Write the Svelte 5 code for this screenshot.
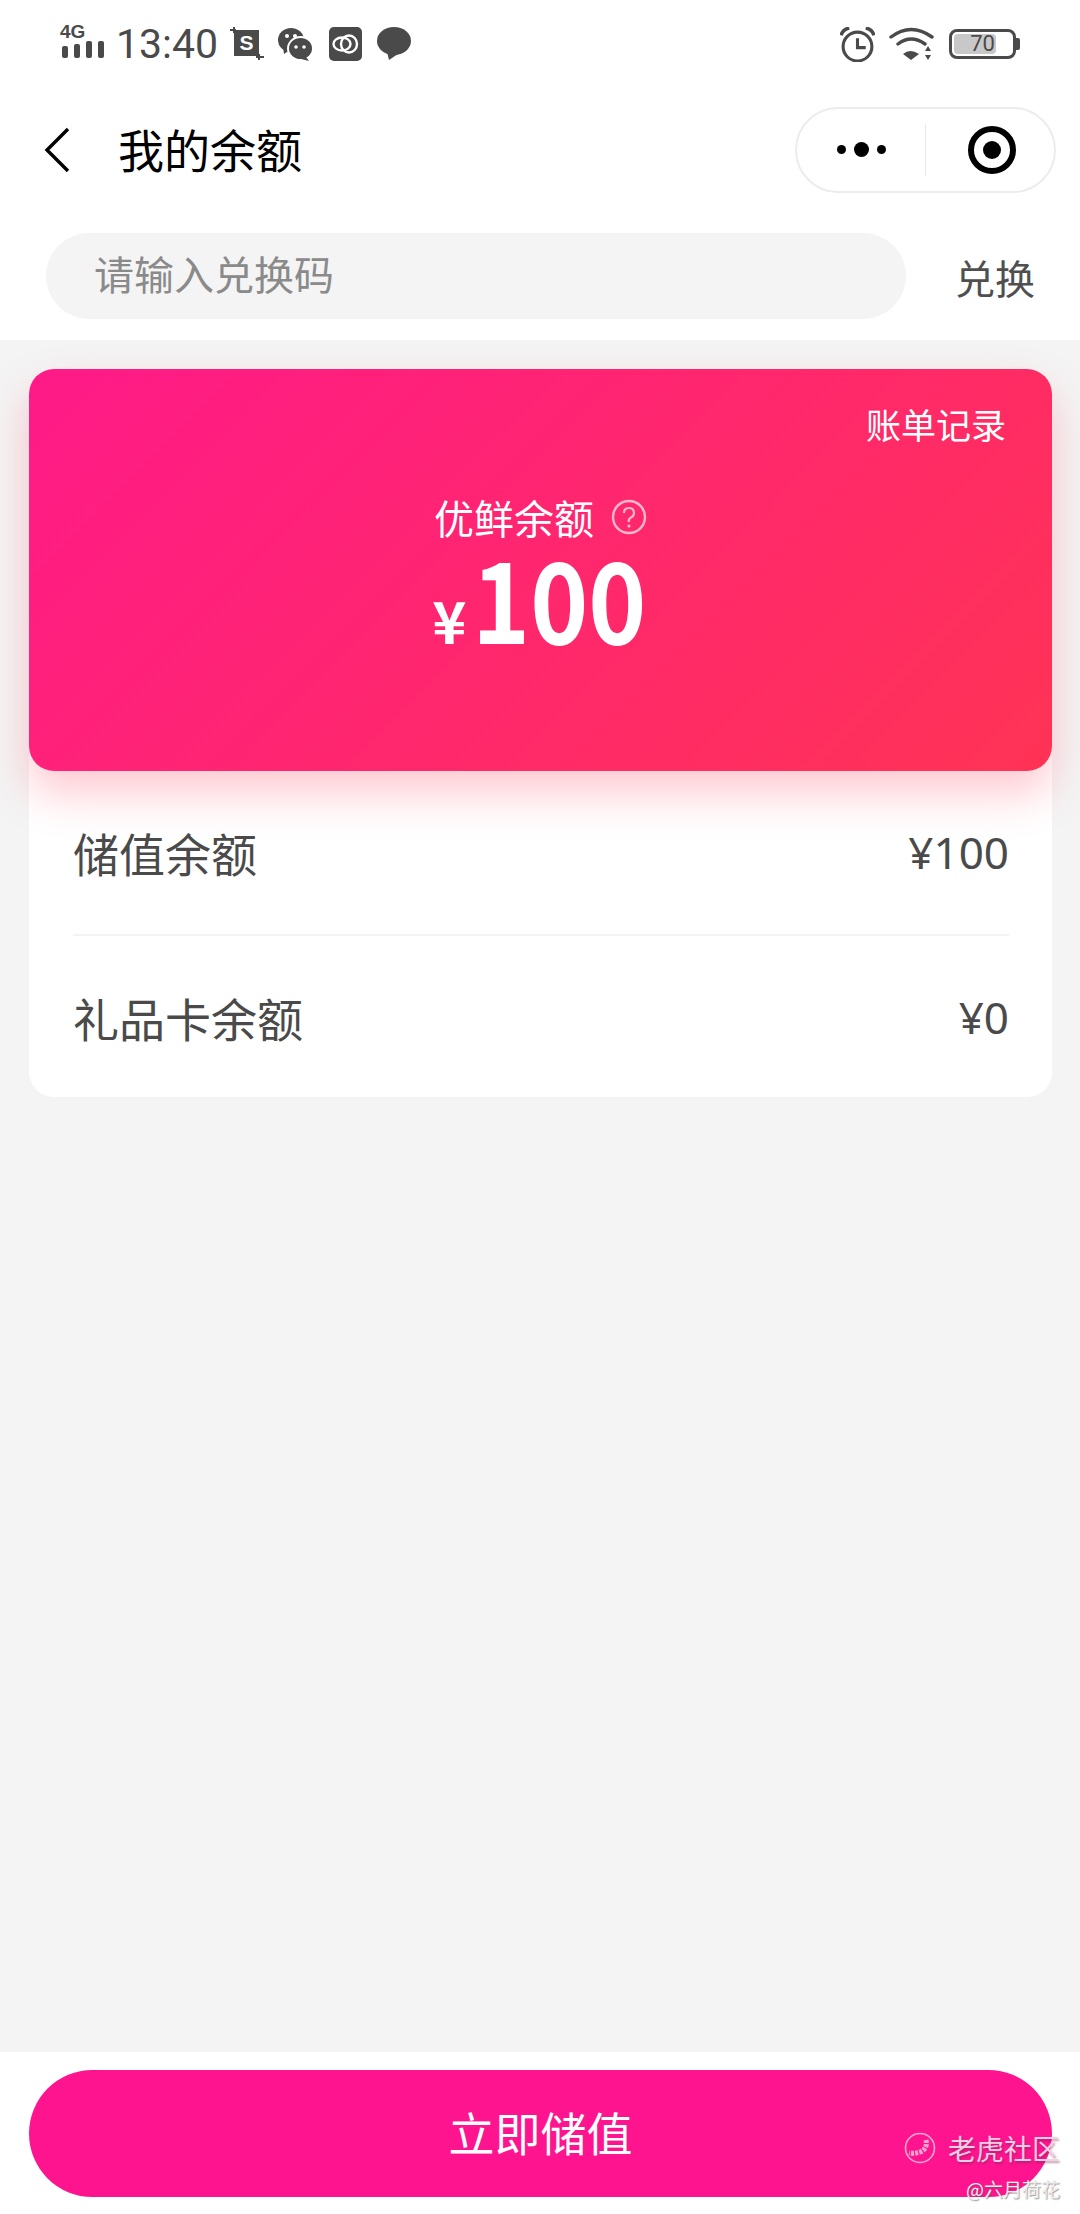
<script lang="ts">
	const rows = [
		{ label: '储值余额', value: '¥100' },
		{ label: '礼品卡余额', value: '¥0' }
	];
</script>

<div class="page">
	<header class="top">
		<div class="status">
			<div class="status-left">
				<svg class="signal" width="46" height="36" viewBox="0 0 46 36">
					<text x="0" y="15" class="net">4G</text>
					<rect x="2" y="23" width="6" height="12" rx="2" />
					<rect x="14" y="21" width="6" height="14" rx="2" />
					<rect x="26" y="18" width="6" height="17" rx="2" />
					<rect x="38" y="18" width="6" height="17" rx="2" />
				</svg>
				<span class="time">13:40</span>
				<svg class="ic-crop" width="34" height="34" viewBox="0 0 34 34">
					<path d="M4 0v6M0 3h6M29 33v-6M26 30h8" stroke="#4a4a4a" stroke-width="2" fill="none" />
					<rect x="4" y="3" width="25" height="26" fill="#4a4a4a" />
					<text x="16.5" y="23" class="crop-s">S</text>
				</svg>
				<svg class="ic-wechat" width="35" height="34" viewBox="0 0 35 34">
					<ellipse cx="13" cy="13" rx="13" ry="12" fill="#4a4a4a" />
					<path d="M5 20l1 7 6-4z" fill="#4a4a4a" />
					<ellipse cx="22.5" cy="21.5" rx="12.5" ry="11.5" fill="#4a4a4a" stroke="#fff" stroke-width="2" />
					<path d="M28 30l3 4-8-2z" fill="#4a4a4a" />
					<circle cx="9" cy="9" r="2" fill="#fff" />
					<circle cx="17" cy="9" r="2" fill="#fff" />
					<circle cx="18" cy="20" r="1.8" fill="#fff" />
					<circle cx="26" cy="20" r="1.8" fill="#fff" />
				</svg>
				<svg class="ic-rings" width="33" height="34" viewBox="0 0 33 34">
					<rect width="33" height="34" rx="5" fill="#4a4a4a" />
					<ellipse cx="13" cy="17" rx="8.5" ry="6.5" fill="none" stroke="#fff" stroke-width="2.4" />
					<ellipse cx="20" cy="17" rx="8" ry="8.5" fill="none" stroke="#fff" stroke-width="2.4" />
				</svg>
				<svg class="ic-bubble" width="34" height="34" viewBox="0 0 34 34">
					<ellipse cx="17" cy="14" rx="17" ry="14" fill="#4a4a4a" />
					<path d="M10 25l2 8 9-6z" fill="#4a4a4a" />
				</svg>
			</div>
			<div class="status-right">
				<svg width="35" height="35" viewBox="0 0 34 34">
					<circle cx="17" cy="19" r="14" fill="none" stroke="#4a4a4a" stroke-width="3" />
					<path d="M17 11v9h8" fill="none" stroke="#4a4a4a" stroke-width="3" />
					<path d="M1 8q2-6 8-7M33 8q-2-6-8-7" fill="none" stroke="#4a4a4a" stroke-width="3.4" />
				</svg>
				<svg width="46" height="34" viewBox="0 0 46 34">
					<path d="M2 10q20-15 41 0M9 17q13-10 27 0" fill="none" stroke="#4a4a4a" stroke-width="3.4" stroke-linecap="round" />
					<path d="M14 27q7-6 16 0l-8 6z" fill="#4a4a4a" />
					<path d="M39 19l3 5h-6zM39 33l3-5h-6z" fill="#4a4a4a" />
				</svg>
				<div class="battery">
					<div class="battery-body">
						<div class="battery-fill"></div>
						<span class="battery-text">70</span>
					</div>
					<div class="battery-cap"></div>
				</div>
			</div>
		</div>

		<nav class="nav">
			<svg class="back" width="26" height="46" viewBox="0 0 26 46">
				<path d="M24 2L3 23l21 21" fill="none" stroke="#000" stroke-width="3.4" />
			</svg>
			<h1 class="title">我的余额</h1>
			<div class="capsule">
				<div class="dots">
					<span class="dot"></span>
					<span class="dot big"></span>
					<span class="dot"></span>
				</div>
				<div class="capsule-line"></div>
				<div class="target"><span></span></div>
			</div>
		</nav>

		<div class="redeem">
			<div class="redeem-input">请输入兑换码</div>
			<span class="redeem-btn">兑换</span>
		</div>
	</header>

	<main class="content">
		<div class="panel">
			<section class="balance">
				<span class="bill">账单记录</span>
				<div class="balance-label">
					<span>优鲜余额</span>
					<svg width="36" height="36" viewBox="0 0 36 36">
						<circle cx="18" cy="18" r="16" fill="none" stroke="#ffb9cd" stroke-width="2.4" />
						<path d="M13 14q0-5 5-5t5 5q0 3-3 4.500t-2 4.500" fill="none" stroke="#ffb9cd" stroke-width="2.2" />
						<circle cx="18" cy="27" r="1.600" fill="#ffb9cd" />
					</svg>
				</div>
				<div class="amount"><span class="yen">¥</span><span class="num">100</span></div>
			</section>
			<ul class="rows">
				{#each rows as row}
					<li class="row">
						<span>{row.label}</span>
						<span class="row-value">{row.value}</span>
					</li>
				{/each}
			</ul>
		</div>
	</main>

	<footer class="bottom">
		<button class="charge">立即储值</button>
	</footer>

	<div class="mark">
		<div class="mark-top">
			<svg width="32" height="32" viewBox="0 0 32 32">
				<circle cx="16" cy="16" r="14.500" fill="none" stroke="#f7a8d2" stroke-width="1.600" />
				<path d="M22 8q2 9-6 12-6 2-11 1" fill="none" stroke="#f7a8d2" stroke-width="5" stroke-dasharray="3 1.200" />
			</svg>
			<span>老虎社区</span>
		</div>
		<div class="mark-sub">@六月荷花</div>
	</div>
</div>

<style>
	:global(body) {
		margin: 0;
		background: #f4f4f4;
	}
	.page {
		position: relative;
		width: 1080px;
		height: 2214px;
		display: flex;
		flex-direction: column;
		overflow: hidden;
		font-family: "Noto Sans CJK SC", "Noto Sans", sans-serif;
		color: #4a4a4a;
	}
	.top {
		background: #fff;
		height: 340px;
		flex: none;
	}
	.status {
		height: 86px;
		padding: 2px 60px 0 60px;
		box-sizing: border-box;
		display: flex;
		justify-content: space-between;
		align-items: center;
	}
	.status-left, .status-right {
		display: flex;
		align-items: center;
	}
	.signal {
		fill: #4a4a4a;
		margin-bottom: 6px;
		overflow: visible;
	}
	.net {
		font: 700 19px "Liberation Sans", sans-serif;
		fill: #4a4a4a;
	}
	.time {
		font: 41px/1 "Roboto", sans-serif;
		color: #4a4a4a;
		margin: 0 0 0 10px;
		width: 105px;
	}
	.ic-crop { margin-left: 9px; }
	.crop-s {
		font: 700 21px "Liberation Sans", sans-serif;
		fill: #fff;
		text-anchor: middle;
	}
	.ic-wechat { margin-left: 14px; }
	.ic-rings { margin-left: 16px; }
	.ic-bubble { margin-left: 15px; }
	.status-right { gap: 14px; }
	.battery {
		display: flex;
		align-items: center;
	}
	.battery-body {
		position: relative;
		width: 67px;
		height: 30px;
		border: 3px solid #4a4a4a;
		border-radius: 8px;
		box-sizing: border-box;
		overflow: hidden;
	}
	.battery-fill {
		position: absolute;
		left: 2px;
		top: 2px;
		bottom: 2px;
		width: 42px;
		background: #c8c8c8;
		border-radius: 4px;
	}
	.battery-text {
		position: absolute;
		inset: 0;
		text-align: center;
		font: 22px/24px "Roboto", sans-serif;
		color: #4a4a4a;
	}
	.battery-cap {
		width: 4px;
		height: 12px;
		background: #4a4a4a;
		border-radius: 0 2px 2px 0;
	}
	.nav {
		height: 129px;
		display: flex;
		align-items: center;
		padding: 0 24px 0 44px;
		box-sizing: border-box;
	}
	.back { flex: none; margin-top: -1px; }
	.title {
		margin: -6px 0 0 48px;
		font-size: 46px;
		font-weight: 400;
		color: #000;
		flex: 1;
		line-height: 1;
	}
	.capsule {
		width: 261px;
		height: 86px;
		margin-top: -2px;
		border: 2px solid #ececec;
		border-radius: 43px;
		box-sizing: border-box;
		display: flex;
		align-items: center;
		background: #fff;
	}
	.dots {
		width: 128px;
		display: flex;
		align-items: center;
		justify-content: center;
		gap: 8px;
		box-sizing: border-box;
	}
	.dot {
		width: 9px;
		height: 9px;
		background: #000;
		border-radius: 50%;
	}
	.dot.big { width: 15px; height: 15px; }
	.capsule-line {
		width: 1px;
		height: 52px;
		background: #e8e8e8;
	}
	.target {
		width: 48px;
		height: 48px;
		margin-left: 42px;
		border: 6px solid #000;
		border-radius: 50%;
		box-sizing: border-box;
		display: flex;
		align-items: center;
		justify-content: center;
	}
	.target span {
		width: 18px;
		height: 18px;
		background: #000;
		border-radius: 50%;
	}
	.redeem {
		display: flex;
		align-items: center;
		padding: 18px 46px 0;
	}
	.redeem-input {
		width: 860px;
		height: 86px;
		flex: none;
		background: #f4f4f4;
		border-radius: 43px;
		padding-left: 48px;
		box-sizing: border-box;
		font-size: 40px;
		line-height: 81px;
		color: #8a8a8a;
	}
	.redeem-btn {
		margin-left: 49px;
		font-size: 40px;
		line-height: 81px;
		color: #4f4f4f;
		white-space: nowrap;
		margin-top: 2px;
	}
	.content {
		flex: 1;
		background: #f4f4f4;
		padding: 29px 28px 0 29px;
	}
	.panel {
		background: #fff;
		border-radius: 25px;
		height: 728px;
	}
	.balance {
		position: relative;
		height: 402px;
		box-sizing: border-box;
		padding-top: 120px;
		border-radius: 25px;
		background: linear-gradient(135deg, #ff1a88 0%, #ff3355 100%);
		box-shadow: 0 22px 44px rgba(255, 60, 90, 0.28);
		color: #fff;
		text-align: center;
	}
	.bill {
		position: absolute;
		top: 31px;
		right: 46px;
		font-size: 35px;
		line-height: 48px;
	}
	.balance-label {
		display: flex;
		align-items: center;
		justify-content: center;
		gap: 17px;
		font-size: 40px;
		line-height: 56px;
	}
	.amount {
		display: flex;
		justify-content: center;
		align-items: baseline;
		line-height: 100px;
		height: 100px;
	}
	.yen {
		font: 700 58px/1 "Noto Sans CJK SC", sans-serif;
		margin-right: 6px;
	}
	.num {
		display: inline-block;
		font: 700 112px/100px "Noto Sans CJK SC", sans-serif;
		transform: scaleX(0.88);
		transform-origin: left;
		margin-right: -22px;
	}
	.rows {
		list-style: none;
		margin: 0;
		padding: 0 43px 0 44px;
	}
	.row {
		height: 163px;
		display: flex;
		justify-content: space-between;
		align-items: center;
		font-size: 46px;
		line-height: 60px;
		color: #4a4a4a;
		padding-bottom: 2px;
		box-sizing: border-box;
	}
	.row:first-child {
		height: 165px;
		border-bottom: 2px solid #f3f3f3;
	}
	.row-value {
		font-family: "Noto Sans", sans-serif;
		font-size: 44px;
	}
	.bottom {
		flex: none;
		height: 162px;
		padding: 18px 28px 0 29px;
		box-sizing: border-box;
		background: #fff;
	}
	.charge {
		display: block;
		width: 100%;
		height: 127px;
		border: 0;
		border-radius: 64px;
		background: #ff1490;
		color: #fff;
		font-family: inherit;
		font-size: 46px;
		padding: 0 0 5px;
	}
	.mark {
		position: absolute;
		right: 20px;
		bottom: 12px;
		text-align: right;
	}
	.mark-top {
		display: flex;
		align-items: center;
		justify-content: flex-end;
		gap: 12px;
		font-size: 28px;
		line-height: 40px;
		color: #f6cfe4;
		text-shadow: 1px 2px 2px rgba(110, 40, 80, 0.45);
	}
	.mark-sub {
		font-size: 19px;
		line-height: 26px;
		margin-top: 8px;
		color: #eee;
		text-shadow: 1px 1px 1px rgba(90, 90, 90, 0.6);
	}
</style>
